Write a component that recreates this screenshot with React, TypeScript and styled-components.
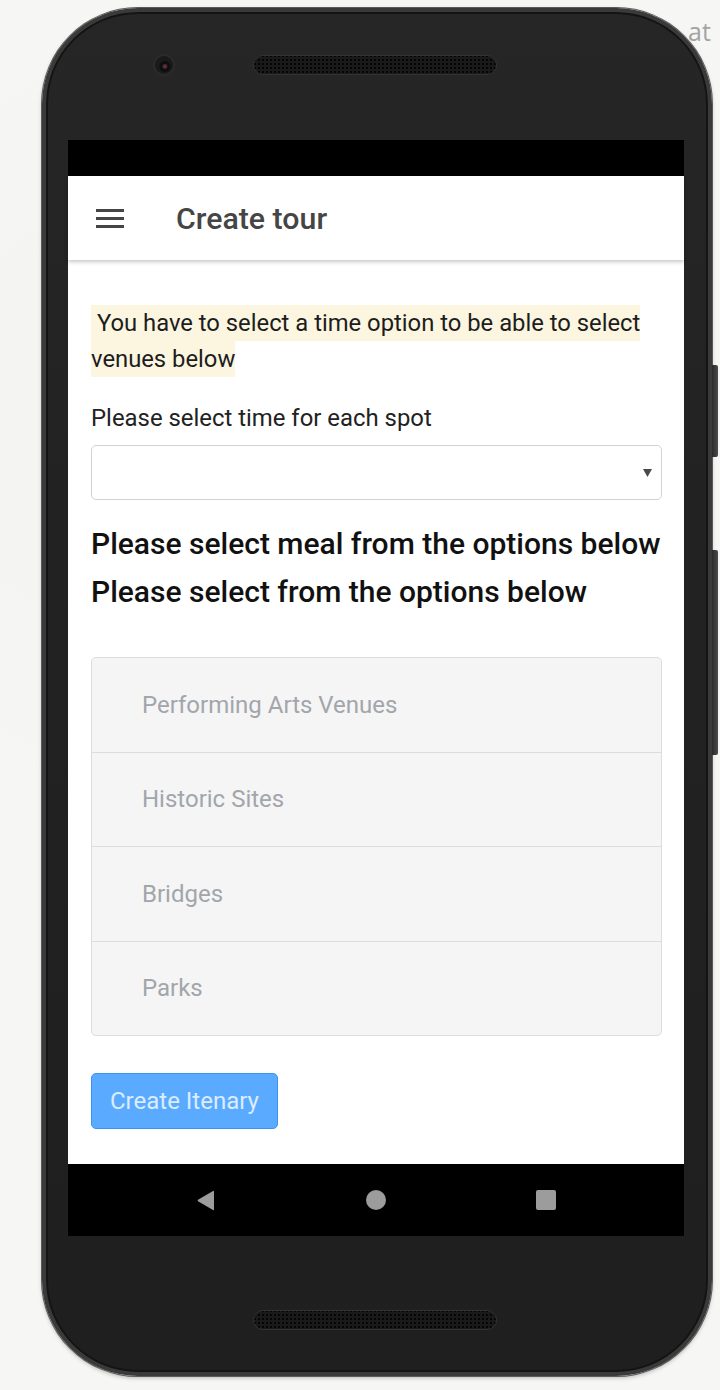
import React from "react";
import styled, { createGlobalStyle } from "styled-components";

const Global = createGlobalStyle`
  html, body { margin: 0; padding: 0; }
  body {
    background: #f6f6f4;
    font-family: Roboto, "Noto Sans", "Liberation Sans", sans-serif;
    -webkit-font-smoothing: antialiased;
  }
  #root { width: 720px; height: 1390px; }
`;

const Page = styled.div`
  position: relative;
  width: 720px;
  height: 1390px;
  padding: 8px 0 0 42px;
  box-sizing: border-box;
  overflow: hidden;
  background:
    radial-gradient(circle at 20% 30%, rgba(0,0,0,0.012), transparent 40%),
    #f6f6f4;
`;

const BackdropText = styled.span`
  position: absolute;
  left: 688px;
  top: 14px;
  font-family: "Open Sans", Roboto, sans-serif;
  font-size: 25px;
  color: #a3a3a3;
  z-index: 0;
`;

const Phone = styled.div`
  position: relative;
  z-index: 1;
  width: 670px;
  height: 1368px;
  box-sizing: border-box;
  border: 4px solid #3a3a3a;
  border-radius: 96px;
  background: linear-gradient(180deg, #262626 0%, #222 40%, #1f1f1f 100%);
  box-shadow: inset 0 0 0 2px #141414, 0 0 0 1px #5a5a5a, 0 2px 4px rgba(0,0,0,0.25);
  display: flex;
  flex-direction: column;
  padding: 0 24px 0 22px;
`;

const SideButton = styled.div<{ $top: number; $height: number }>`
  position: absolute;
  right: -10px;
  top: ${(p) => p.$top}px;
  width: 6px;
  height: ${(p) => p.$height}px;
  background: linear-gradient(90deg, #2a2a2a, #4a4a4a);
  border-radius: 0 2px 2px 0;
`;

const TopBezel = styled.div`
  height: 128px;
  flex: none;
  display: flex;
  align-items: flex-start;
  padding: 43px 0 0 87px;
  box-sizing: border-box;
  gap: 80px;
`;

const Camera = styled.div`
  width: 18px;
  height: 18px;
  margin-top: 1px;
  border-radius: 50%;
  background: radial-gradient(circle at 55% 58%, #5a2e3a 0 1.5px, #0e0e0e 3px 5px, #1a1a1a 6px);
  box-shadow: 0 0 0 2px #2b2b2b;
`;

const Speaker = styled.div`
  width: 244px;
  height: 20px;
  border-radius: 10px;
  box-sizing: border-box;
  border: 1px solid #333;
  background-color: #1a1a1a;
  background-image: radial-gradient(circle, #050505 0.9px, transparent 1.2px);
  background-size: 4px 4px;
  background-position: 3px 2px;
`;

const Screen = styled.div`
  width: 616px;
  height: 1096px;
  flex: none;
  display: flex;
  flex-direction: column;
  background: #fff;
`;

const StatusBar = styled.div`
  height: 36px;
  background: #000;
  flex: none;
`;

const AppBar = styled.header`
  height: 84px;
  flex: none;
  display: flex;
  align-items: center;
  gap: 52px;
  padding-left: 28px;
  background: #fff;
  box-shadow: 0 2px 4px rgba(0, 0, 0, 0.22);
  position: relative;
  z-index: 1;
`;

const Title = styled.h1`
  margin: 0;
  font-size: 30.3px;
  font-weight: 500;
  color: #454545;
`;

const Content = styled.main`
  flex: 1;
  display: flex;
  flex-direction: column;
  padding: 45px 22px 0 23px;
  color: #1d1d1d;
`;

const Notice = styled.p`
  margin: 0;
  font-size: 23.8px;
  line-height: 36px;
`;

const NoticeMark = styled.span`
  background: #fcf6e0;
  padding: 4px 0;
  -webkit-box-decoration-break: clone;
  box-decoration-break: clone;
`;

const Label = styled.label`
  display: block;
  margin-top: 26px;
  font-size: 23.9px;
  line-height: 30px;
  color: #222;
`;

const SelectBox = styled.div`
  margin-top: 12px;
  height: 55px;
  box-sizing: border-box;
  border: 1px solid #cfd3d8;
  border-radius: 5px;
  display: flex;
  align-items: center;
  justify-content: flex-end;
  padding-right: 9px;
`;

const Heading = styled.h2<{ $first?: boolean }>`
  margin: ${(p) => (p.$first ? "20px" : "0")} 0 0;
  font-size: 30px;
  font-weight: 500;
  line-height: 48px;
  color: #111;
`;

const List = styled.ul`
  list-style: none;
  margin: 41px 0 0;
  padding: 0;
  border: 1px solid #dcdcdc;
  border-radius: 5px;
  background: #f5f5f5;
  overflow: hidden;
`;

const Item = styled.li`
  height: 93.5px;
  box-sizing: content-box;
  display: flex;
  align-items: center;
  padding-left: 50px;
  font-size: 24px;
  color: #a2a6ab;
  & + & { border-top: 1px solid #dcdcdc; }
`;

const Button = styled.button`
  align-self: flex-start;
  margin-top: 37px;
  height: 56px;
  padding: 0 18px;
  border: 1px solid #3d93f2;
  border-radius: 5px;
  background: #5aabff;
  color: #dcecff;
  font-family: inherit;
  font-size: 24px;
`;

const NavBar = styled.nav`
  height: 72px;
  flex: none;
  margin-top: auto;
  background: #000;
  display: flex;
  align-items: center;
  justify-content: space-between;
  padding: 0 128px 0 129px;
`;

const BottomBezel = styled.div`
  flex: 1;
  display: flex;
  justify-content: center;
  padding-top: 74px;
  padding-right: 2px;
  box-sizing: border-box;
`;

const Menu = () => (
  <svg width="28" height="20" viewBox="0 0 28 20">
    <rect x="0" y="1" width="28" height="3" fill="#454545" />
    <rect x="0" y="9" width="28" height="3" fill="#454545" />
    <rect x="0" y="17" width="28" height="3" fill="#454545" />
  </svg>
);

const Caret = () => (
  <svg width="9" height="9" viewBox="0 0 9 9">
    <path d="M0 1 L9 1 L4.5 9 Z" fill="#4a4a4a" />
  </svg>
);

const Back = () => (
  <svg width="18" height="21" viewBox="0 0 18 21">
    <path d="M17 1.5 L17 19.5 Q17 20.5 16 20 L1 11.3 Q0.2 10.5 1 9.7 L16 1 Q17 0.5 17 1.5 Z" fill="#9c9c9c" />
  </svg>
);

const Home = () => (
  <svg width="20" height="20" viewBox="0 0 20 20">
    <circle cx="10" cy="10" r="10" fill="#9c9c9c" />
  </svg>
);

const Recent = () => (
  <svg width="20" height="20" viewBox="0 0 20 20">
    <rect x="0" y="0" width="20" height="20" rx="2" fill="#9c9c9c" />
  </svg>
);

const venues = ["Performing Arts Venues", "Historic Sites", "Bridges", "Parks"];

export default function App() {
  return (
    <>
      <Global />
      <Page>
        <BackdropText>at</BackdropText>
        <Phone>
          <SideButton $top={353} $height={92} />
          <SideButton $top={538} $height={205} />
          <TopBezel>
            <Camera />
            <Speaker />
          </TopBezel>
          <Screen>
            <StatusBar />
            <AppBar>
              <Menu />
              <Title>Create tour</Title>
            </AppBar>
            <Content>
              <Notice>
                <NoticeMark>&nbsp;You have to select a time option to be able to select venues below</NoticeMark>
              </Notice>
              <Label>Please select time for each spot</Label>
              <SelectBox>
                <Caret />
              </SelectBox>
              <Heading $first>Please select meal from the options below</Heading>
              <Heading>Please select from the options below</Heading>
              <List>
                {venues.map((v) => (
                  <Item key={v}>{v}</Item>
                ))}
              </List>
              <Button>Create Itenary</Button>
            </Content>
            <NavBar>
              <Back />
              <Home />
              <Recent />
            </NavBar>
          </Screen>
          <BottomBezel>
            <Speaker />
          </BottomBezel>
        </Phone>
      </Page>
    </>
  );
}
